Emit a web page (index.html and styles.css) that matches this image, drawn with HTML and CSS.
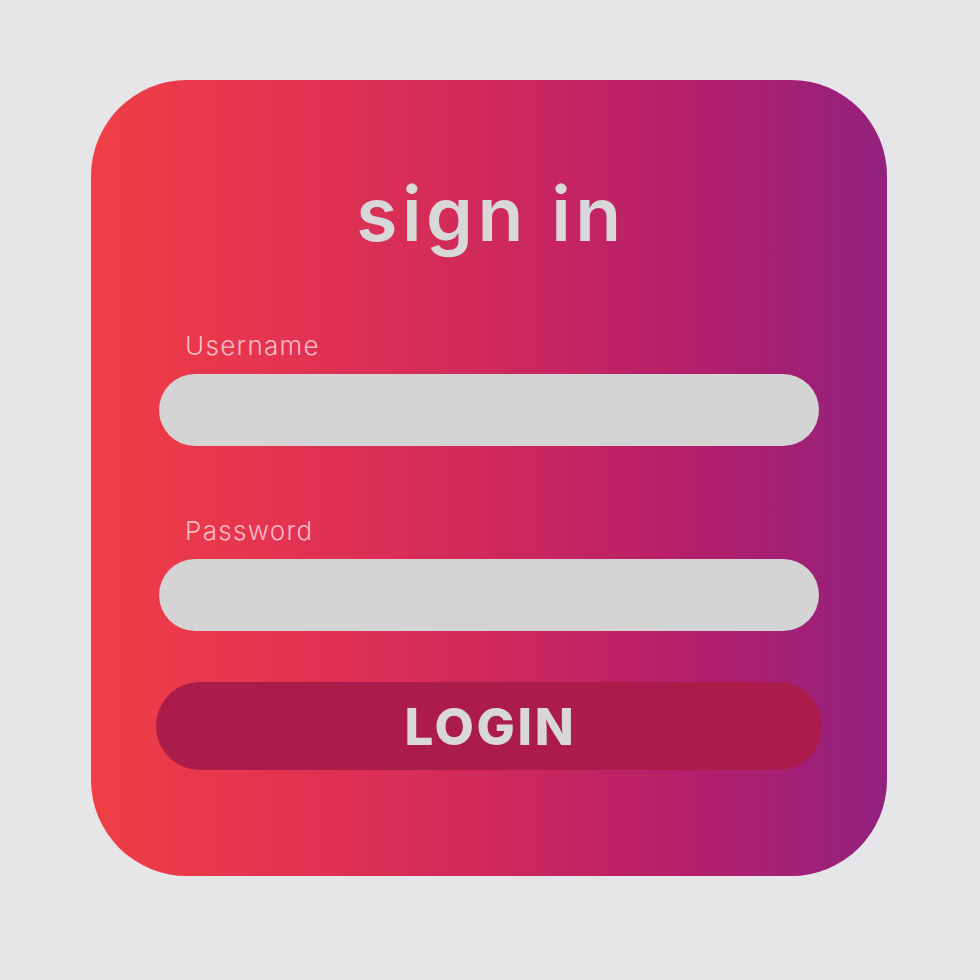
FILE: index.html
```html
<!DOCTYPE html>
<html>
<head>
<meta charset="utf-8">
<link rel="stylesheet" href="styles.css">
</head>
<body>
<div class="card">
  <h1 class="title">sign in</h1>
  <form class="form">
    <label class="label">Username</label>
    <div class="input"></div>
    <label class="label label-pw">Password</label>
    <div class="input"></div>
    <div class="btn">LOGIN</div>
  </form>
</div>
</body>
</html>
```
FILE: styles.css
```css
html, body {
  margin: 0;
  padding: 0;
  background: #e6e6e8;
  width: 980px;
  height: 980px;
}
.card {
  box-sizing: border-box;
  margin: 80px 0 0 91px;
  width: 796px;
  height: 796px;
  border-radius: 96px;
  background: linear-gradient(90deg, #ef3f45 0%, #e53450 22%, #cf295b 50%, #b51f6b 75%, #92217e 100%);
  display: flex;
  flex-direction: column;
  align-items: center;
  padding: 0 65px;
  font-family: Inter, "Liberation Sans", sans-serif;
}
.title {
  margin: 89px 0 0 0;
  font-size: 75px;
  line-height: 90px;
  font-weight: 600;
  color: #d8d8d8;
  letter-spacing: 4.5px;
  text-indent: 4px;
}
.form {
  width: 100%;
  display: flex;
  flex-direction: column;
}
.label {
  margin: 71px 0 0 29px;
  font-size: 26px;
  line-height: 31px;
  font-weight: 300;
  color: rgba(255, 225, 230, 0.78);
  letter-spacing: 1.3px;
}
.label-pw {
  margin-top: 69px;
}
.input {
  margin: 13px 3px 0 3px;
  height: 72px;
  border-radius: 36px;
  background: #d4d4d4;
}
.btn {
  margin-top: 51px;
  height: 88px;
  border-radius: 44px;
  background: #ab1c4a;
  color: #d8d8d8;
  display: flex;
  align-items: center;
  justify-content: center;
  font-size: 51px;
  font-weight: 800;
  letter-spacing: 2.6px;
  text-indent: 3px;
}
```
